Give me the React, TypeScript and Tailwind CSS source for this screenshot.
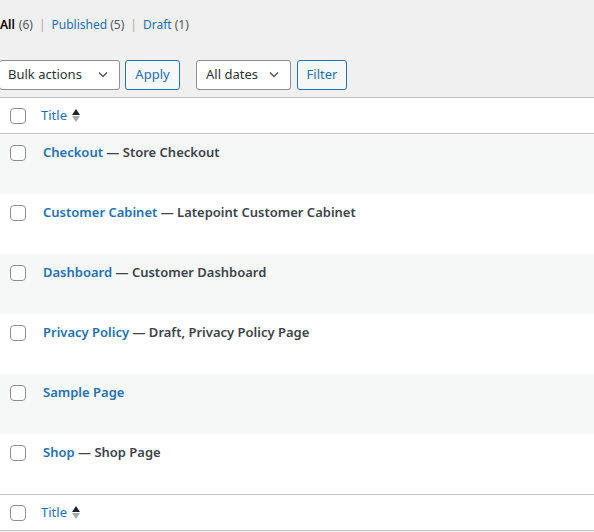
const rows: { title: string; state?: string }[] = [
  { title: 'Checkout', state: 'Store Checkout' },
  { title: 'Customer Cabinet', state: 'Latepoint Customer Cabinet' },
  { title: 'Dashboard', state: 'Customer Dashboard' },
  { title: 'Privacy Policy', state: 'Draft, Privacy Policy Page' },
  { title: 'Sample Page' },
  { title: 'Shop', state: 'Shop Page' },
];

function Checkbox() {
  return <span className="block h-4 w-4 rounded-[4px] border border-[#8c8f94] bg-white" />;
}

function Chevron() {
  return (
    <svg width="16" height="16" viewBox="0 0 20 20" className="text-[#50575e]">
      <path d="M5 7l5 5 5-5" fill="none" stroke="currentColor" strokeWidth="1.8" />
    </svg>
  );
}

function SortArrows() {
  return (
    <span className="ml-[5px] flex flex-col items-center gap-[1px]">
      <svg width="8" height="6" viewBox="0 0 8 6">
        <path d="M4 0L8 6H0z" fill="#1d2327" />
      </svg>
      <svg width="8" height="6" viewBox="0 0 8 6">
        <path d="M0 0h8L4 6z" fill="#a7aaad" />
      </svg>
    </span>
  );
}

function HeaderRow({ border }: { border: string }) {
  return (
    <div className={`flex h-9 items-center bg-white ${border}`}>
      <div className="w-[41px] pl-[10px]">
        <Checkbox />
      </div>
      <span className="pt-px text-[13px] text-[#2271b1]">Title</span>
      <SortArrows />
    </div>
  );
}

export default function App() {
  return (
    <div
      className="h-[532px] w-[594px] overflow-hidden bg-[#f0f0f1]"
      style={{ fontFamily: '"Noto Sans", "Open Sans", sans-serif' }}
    >
      <div className="flex h-[48px] items-center pt-[1px] text-[12px] text-[#50575e]">
        <span className="font-semibold text-black">All</span>
        <span className="ml-1">(6)</span>
        <span className="mx-[6px] text-[#a7aaad]">|</span>
        <span className="text-[#2271b1]">
          Published <span className="text-[#50575e]">(5)</span>
        </span>
        <span className="mx-[6px] text-[#a7aaad]">|</span>
        <span className="text-[#2271b1]">
          Draft <span className="text-[#50575e]">(1)</span>
        </span>
      </div>

      <div className="mt-[12px] flex items-center">
        <div className="-ml-px flex h-[30px] w-[121px] items-center justify-between rounded-[3px] border border-[#8c8f94] bg-white pl-[8px] pr-[8px] text-[13px] text-[#2c3338]">
          Bulk actions
          <Chevron />
        </div>
        <div className="ml-[5px] flex h-[30px] w-[55px] items-center justify-center rounded-[3px] border border-[#2271b1] bg-[#f6f7f7] text-[13px] text-[#2271b1]">
          Apply
        </div>
        <div className="ml-[16px] flex h-[30px] w-[95px] items-center justify-between rounded-[3px] border border-[#8c8f94] bg-white pl-[9px] pr-[8px] text-[13px] text-[#2c3338]">
          All dates
          <Chevron />
        </div>
        <div className="ml-[6px] flex h-[30px] w-[50px] items-center justify-center rounded-[3px] border border-[#2271b1] bg-[#f6f7f7] text-[13px] text-[#2271b1]">
          Filter
        </div>
      </div>

      <div className="mt-[7px] border-y border-[#c3c4c7]">
        <HeaderRow border="border-b border-[#c3c4c7]" />
        {rows.map((r, i) => (
          <div
            key={r.title}
            className={`flex h-[60px] items-start pt-[11px] ${i % 2 === 0 ? 'bg-[#f6f7f7]' : 'bg-white'}`}
          >
            <div className="w-[43px] pl-[10px]">
              <Checkbox />
            </div>
            <div className="-mt-[2px] text-[13px] font-semibold">
              <span className="text-[#2271b1]">{r.title}</span>
              {r.state && <span className="text-[#3c434a]"> — {r.state}</span>}
            </div>
          </div>
        ))}
        <HeaderRow border="border-t border-[#c3c4c7]" />
      </div>
    </div>
  );
}
